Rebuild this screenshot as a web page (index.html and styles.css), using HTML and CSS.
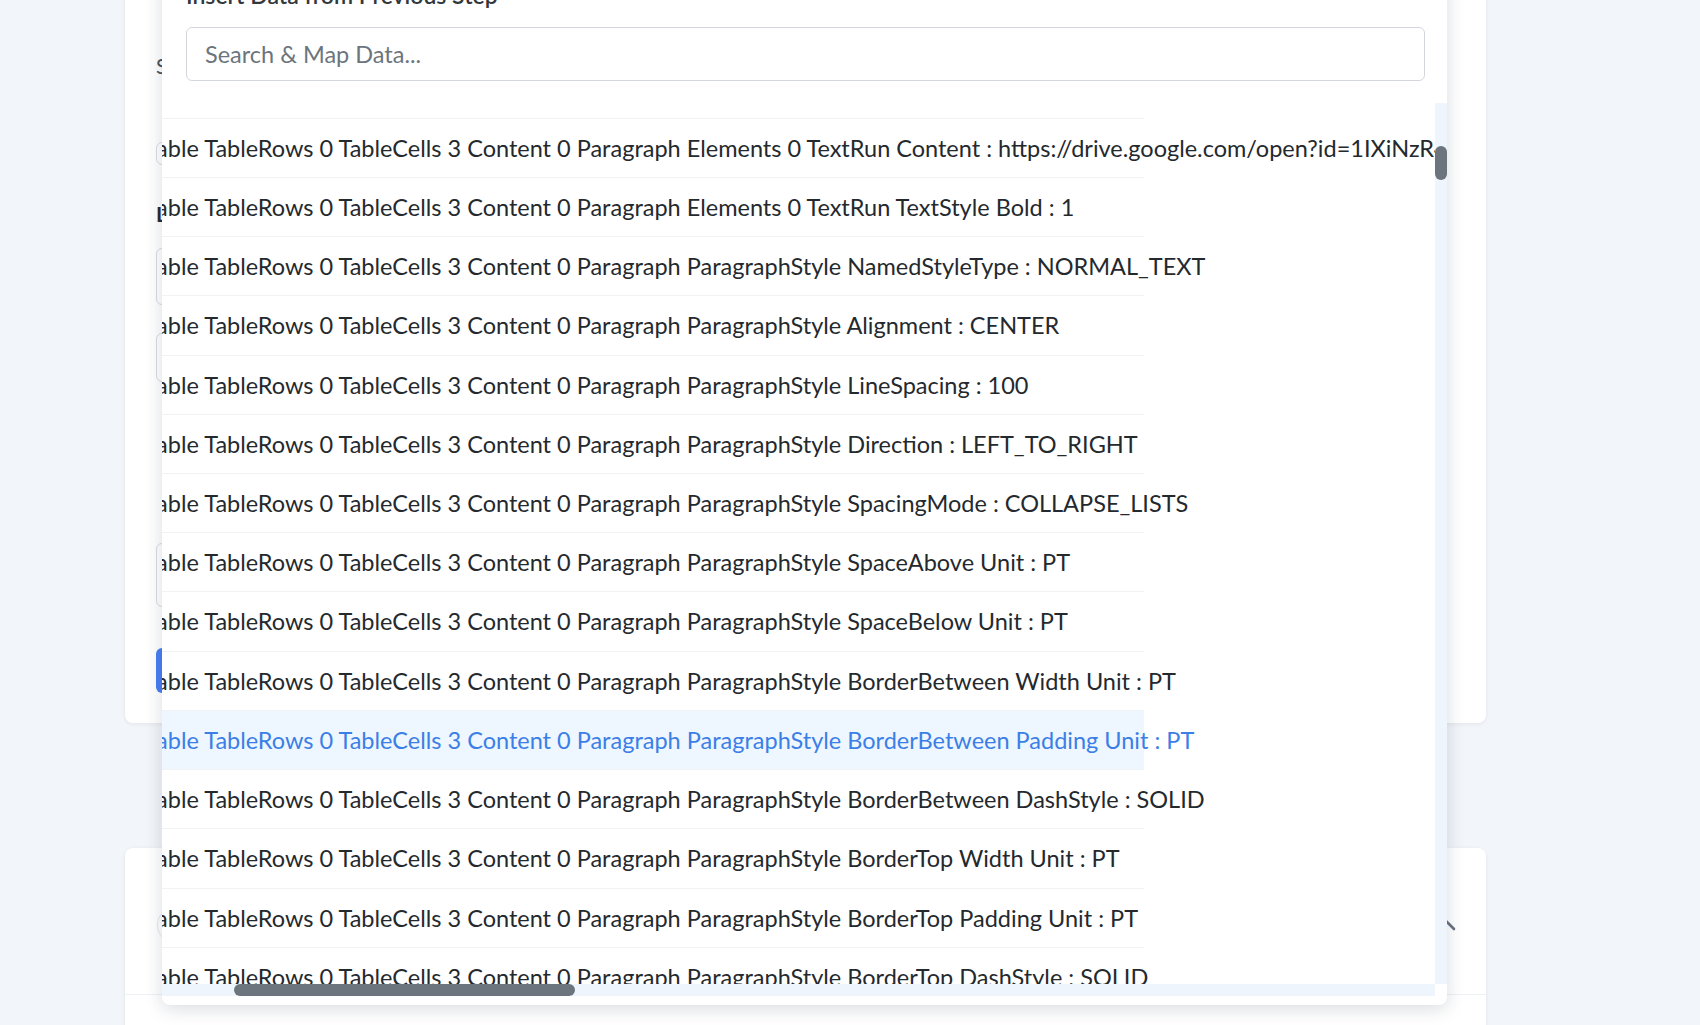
FILE: index.html
```html
<!DOCTYPE html>
<html lang="en">
<head>
<meta charset="utf-8">
<title>Workflow – Action Step</title>
<link rel="stylesheet" href="styles.css">
</head>
<body>
<main class="page">
  <section class="step-card action-card">
    <p class="field-label">Select Document</p>
    <span class="chip">Required</span>
    <p class="field-title">Link to File</p>
    <div class="input input-tall"></div>
    <div class="input"></div>
    <div class="input input-area"></div>
    <button class="btn-primary" type="button">Save &amp; Send Test Request</button>

    <div class="mapper">
      <h3 class="mapper-title">Insert Data from Previous Step</h3>
      <input class="mapper-search" type="text" placeholder="Search &amp; Map Data...">
      <div class="map-scroll">
        <div class="map-list" id="mapList">
          <ul class="map-items" id="mapItems"></ul>
        </div>
        <div class="sb sb-v"><span class="sb-thumb" id="thumbV"></span></div>
        <div class="sb sb-h"><span class="sb-thumb" id="thumbH"></span></div>
      </div>
    </div>
  </section>

  <section class="step-card next-card">
    <header class="step-head">
      <span class="app-badge"></span>
      <span class="step-name">Action : Send Email</span>
      <svg class="chevron" width="20" height="12" viewBox="0 0 20 12" aria-hidden="true">
        <polyline points="2,10 10,2 18,10" fill="none" stroke="#6b7280" stroke-width="2.6" stroke-linecap="round" stroke-linejoin="round"/>
      </svg>
    </header>
    <div class="step-body"></div>
  </section>
</main>
<script src="app.js"></script>
</body>
</html>
```

FILE: styles.css
```css
html, body {
  height: 100%;
  overflow: hidden;
}

body {
  margin: 0;
  background: #f2f5f9;
  font-family: Lato, "Open Sans", "Liberation Sans", sans-serif;
  color: #262b30;
}

.page {
  width: 1361px;
  margin-top: -30px;
  padding-left: 125px;
}

.step-card {
  background: #fff;
  border-radius: 8px;
  box-shadow: 0 1px 4px rgba(30, 45, 70, 0.08);
}

/* action step that owns the open mapping dropdown */
.action-card {
  position: relative;
  display: flex;
  flex-direction: column;
  align-items: flex-start;
  padding: 82px 48px 30px 31px;
}

.field-label {
  margin: 0;
  font-size: 21px;
  line-height: 28px;
  color: #4b5259;
}

.chip {
  display: block;
  margin-top: 62px;
  width: 120px;
  height: 23px;
  box-sizing: border-box;
  border: 1px solid #d9dee5;
  border-radius: 6px;
  font-size: 12px;
  line-height: 21px;
  color: #6b7280;
  text-align: center;
}

.field-title {
  margin: 35px 0 0;
  font-size: 21px;
  line-height: 27px;
  font-weight: 700;
  color: #2a2a2a;
}

.input {
  align-self: stretch;
  margin-top: 28px;
  height: 49px;
  box-sizing: border-box;
  border: 1px solid #d7dce2;
  border-radius: 6px;
}

.input-tall {
  margin-top: 21px;
  height: 57px;
}

.input-area {
  margin-top: 161px;
  height: 64px;
}

.btn-primary {
  margin-top: 41px;
  height: 45px;
  padding: 0 28px;
  border: 0;
  border-radius: 6px;
  background: #4a7ef3;
  color: #fff;
  font: 600 18px Lato, sans-serif;
}

/* mapping dropdown */
.mapper {
  position: absolute;
  top: -8px;
  left: 37px;
  width: 1285px;
  padding: 20px 0 9px;
  background: #fff;
  border-radius: 8px;
  box-shadow: 0 4px 18px rgba(20, 35, 60, 0.16);
  display: flex;
  flex-direction: column;
}

.mapper-title {
  margin: 0 22px 0 24px;
  font-size: 23px;
  line-height: 26px;
  font-weight: 600;
  color: #33383d;
}

.mapper-search {
  margin: 19px 22px 0 24px;
  height: 54px;
  box-sizing: border-box;
  padding: 0 18px;
  border: 1px solid #d3d7dc;
  border-radius: 6px;
  font: 23.5px Lato, sans-serif;
  color: #262b30;
  outline: none;
}

.mapper-search::placeholder {
  color: #6c757d;
}

.map-scroll {
  position: relative;
  margin-top: 22px;
  height: 893px;
}

.map-list {
  width: calc(100% - 12px);
  height: 881px;
  overflow: auto;
  scrollbar-width: none;
}

.map-items {
  margin: 0 24px 0 0;
  padding: 0;
  list-style: none;
}

.map-item {
  padding: 13px 24px 13px 82px;
  line-height: 32.2px;
  font-size: 23.5px;
  white-space: nowrap;
  border-bottom: 1px solid #f0f2f4;
  color: #24292e;
  cursor: pointer;
}

.map-item.is-active {
  background: #eef6ff;
  color: #3b7fe6;
}

/* scrollbars drawn over the list */
.sb {
  position: absolute;
  background: #eef5fc;
}

.sb-v {
  top: 0;
  right: 0;
  width: 12px;
  height: 881px;
}

.sb-h {
  left: 0;
  bottom: 0;
  width: calc(100% - 12px);
  height: 12px;
}

.sb-thumb {
  position: absolute;
  background: #6c757d;
  border-radius: 6px;
}

.sb-v .sb-thumb {
  left: 0;
  width: 12px;
}

.sb-h .sb-thumb {
  top: 0;
  height: 12px;
}

/* next step, collapsed */
.next-card {
  margin-top: 125px;
}

.step-head {
  display: flex;
  align-items: center;
  height: 147px;
  box-sizing: border-box;
  padding: 8px 30px 0 32px;
  border-bottom: 1px solid #eef1f5;
}

.app-badge {
  width: 36px;
  height: 36px;
  box-sizing: border-box;
  border: 1.5px solid #e3e7ec;
  border-radius: 50%;
}

.step-name {
  margin-left: 16px;
  font-size: 20px;
  font-weight: 600;
  flex: 1;
}

.chevron {
  display: block;
}

.step-body {
  height: 300px;
}
```

FILE: app.js
```js
// Fills the mapping dropdown with the flattened fields of the Google Docs response
(function () {
  var P = 'Body Content 5 Table ';
  var notes = 'Thank you for your business. Payment is due within fifteen days of the invoice date. ' +
    'Please include the invoice number with your transfer so that we can match it quickly. ' +
    'Late payments are subject to a monthly fee of one and a half percent on the outstanding balance. ' +
    'For any questions regarding this invoice, reply to this email any time. Thanks a lot, Billing!';

  var texts = [
    ['Item', 'Description', 'Amount', 'https://drive.google.com/open?id=1IXiNzR4q8WkTb2yVJ0mDc7sLhUe5pGa'],
    ['Website Redesign', 'Landing page and checkout flow', '$1,200.00', 'https://drive.google.com/open?id=1Pq7TnXoY3bKf9RzWd2LhVc6sMe0jAuN'],
    [notes, 'Hosting', '$240.00', 'https://drive.google.com/open?id=1Zr5KcWm8TfQ2xLbN7pVd3HsYe0gJoAu']
  ];

  var fields = [
    ['Title', 'Invoice Template'],
    ['DocumentId', '1vK3Wf8sQp0ZrX2bYtN6mHcLdJ4eA9uG'],
    ['RevisionId', 'ALm37BWq9xv3Rk0'],
    ['SuggestionsViewMode', 'SUGGESTIONS_INLINE'],
    ['Body Content 5 StartIndex', 98],
    ['Body Content 5 EndIndex', 412],
    [P + 'Rows', 3],
    [P + 'Columns', 4],
    [P + 'TableRows 0 StartIndex', 99],
    [P + 'TableRows 0 EndIndex', 173],
    [P + 'TableRows 0 TableRowStyle MinRowHeight Unit', 'PT'],
    [P + 'TableStyle TableColumnProperties 0 WidthType', 'EVENLY_DISTRIBUTED'],
    [P + 'TableStyle TableColumnProperties 3 WidthType', 'EVENLY_DISTRIBUTED']
  ];

  function cell(r, c, start) {
    var p = P + 'TableRows ' + r + ' TableCells ' + c + ' ';
    var text = texts[r][c];
    var end = start + text.length + 1;
    var out = [
      [p + 'StartIndex', start],
      [p + 'EndIndex', end],
      [p + 'Content 0 StartIndex', start + 1],
      [p + 'Content 0 EndIndex', end],
      [p + 'Content 0 Paragraph Elements 0 StartIndex', start + 1],
      [p + 'Content 0 Paragraph Elements 0 EndIndex', end],
      [p + 'Content 0 Paragraph Elements 0 TextRun Content', text],
      [p + 'Content 0 Paragraph Elements 0 TextRun TextStyle Bold', 1]
    ];
    var ps = p + 'Content 0 Paragraph ParagraphStyle ';
    [
      ['NamedStyleType', 'NORMAL_TEXT'],
      ['Alignment', 'CENTER'],
      ['LineSpacing', 100],
      ['Direction', 'LEFT_TO_RIGHT'],
      ['SpacingMode', 'COLLAPSE_LISTS'],
      ['SpaceAbove Unit', 'PT'],
      ['SpaceBelow Unit', 'PT']
    ].forEach(function (f) { out.push([ps + f[0], f[1]]); });
    ['BorderBetween', 'BorderTop', 'BorderBottom', 'BorderLeft', 'BorderRight'].forEach(function (b) {
      out.push([ps + b + ' Width Unit', 'PT']);
      out.push([ps + b + ' Padding Unit', 'PT']);
      out.push([ps + b + ' DashStyle', 'SOLID']);
    });
    [
      ['IndentFirstLine Unit', 'PT'],
      ['IndentStart Unit', 'PT'],
      ['IndentEnd Unit', 'PT'],
      ['KeepLinesTogether', 0],
      ['KeepWithNext', 0],
      ['AvoidWidowAndOrphan', 0],
      ['Shading BackgroundColor', '']
    ].forEach(function (f) { out.push([ps + f[0], f[1]]); });
    var cs = p + 'TableCellStyle ';
    [
      ['RowSpan', 1], ['ColumnSpan', 1], ['BackgroundColor', ''],
      ['PaddingLeft Magnitude', 5], ['PaddingLeft Unit', 'PT'],
      ['PaddingRight Magnitude', 5], ['PaddingRight Unit', 'PT'],
      ['PaddingTop Magnitude', 5], ['PaddingTop Unit', 'PT'],
      ['PaddingBottom Magnitude', 5], ['PaddingBottom Unit', 'PT'],
      ['ContentAlignment', 'TOP']
    ].forEach(function (f) { out.push([cs + f[0], f[1]]); });
    return out;
  }

  var idx = 112;
  fields = fields.concat(cell(0, 3, idx));
  for (var r = 1; r < 3; r++) {
    for (var c = 0; c < 4; c++) {
      idx += 20;
      fields = fields.concat(cell(r, c, idx));
    }
  }
  fields = fields.slice(0, 385);

  var list = document.getElementById('mapItems');
  var html = '';
  fields.forEach(function (f, i) {
    var label = (f[0] + ' : ' + f[1]).replace(/&/g, '&amp;').replace(/</g, '&lt;');
    html += '<li class="map-item' + (i === 29 ? ' is-active' : '') + '">' + label + '</li>';
  });
  list.innerHTML = html;

  var box = document.getElementById('mapList');
  var thumbV = document.getElementById('thumbV');
  var thumbH = document.getElementById('thumbH');

  // keeps the drawn scrollbar thumbs in step with the list's scroll position
  function syncThumbs() {
    var trackV = thumbV.parentNode.clientHeight;
    var trackH = thumbH.parentNode.clientWidth;
    var lenV = Math.max(24, trackV * box.clientHeight / box.scrollHeight);
    var lenH = Math.max(24, trackH * box.clientWidth / box.scrollWidth);
    var maxV = box.scrollHeight - box.clientHeight;
    var maxH = box.scrollWidth - box.clientWidth;
    thumbV.style.height = lenV + 'px';
    thumbV.style.top = (maxV > 0 ? box.scrollTop / maxV * (trackV - lenV) : 0) + 'px';
    thumbH.style.width = lenH + 'px';
    thumbH.style.left = (maxH > 0 ? box.scrollLeft / maxH * (trackH - lenH) : 0) + 'px';
  }

  box.addEventListener('scroll', syncThumbs);
  box.scrollTop = 19 * 59.2 - 16;
  box.scrollLeft = 267;
  syncThumbs();
})();
```
